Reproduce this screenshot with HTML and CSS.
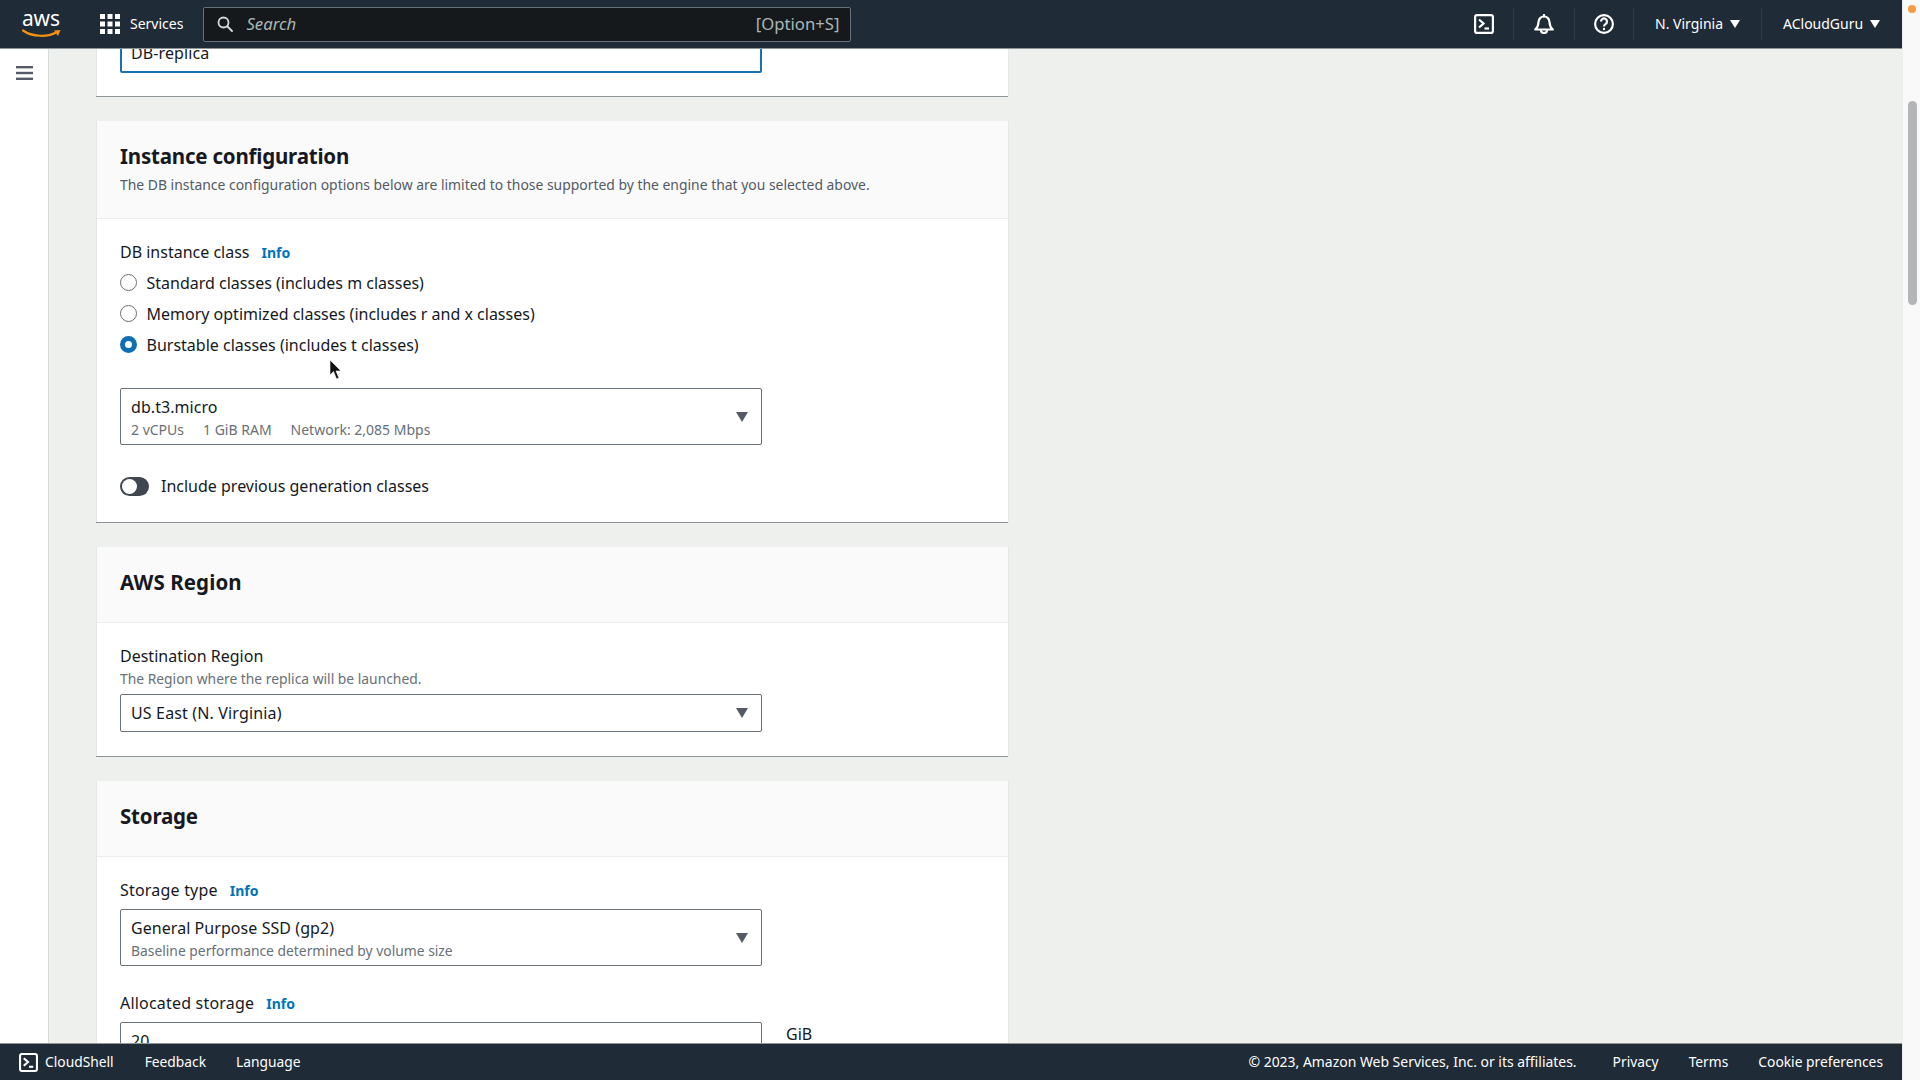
FILE: index.html
```html
<!DOCTYPE html>
<html lang="en">
<head>
<meta charset="utf-8">
<title>Create read replica</title>
<link rel="stylesheet" href="styles.css">
</head>
<body>
<div class="page">
  <header class="topbar">
    <a class="logo"><span class="logo-text">aws</span>
      <svg class="logo-smile" viewBox="0 0 40 9"><path d="M1 1.500C10 8 26 8.500 35 3" fill="none" stroke="#f29111" stroke-width="2.200" stroke-linecap="round"/><path d="M32 1.500 38.500 1 36 7Z" fill="#f29111"/></svg>
    </a>
    <a class="services">
      <svg class="grid-icon" viewBox="0 0 20 20" fill="#fff"><rect x="0" y="0" width="5" height="5"/><rect x="7.500" y="0" width="5" height="5"/><rect x="15" y="0" width="5" height="5"/><rect x="0" y="7.500" width="5" height="5"/><rect x="7.500" y="7.500" width="5" height="5"/><rect x="15" y="7.500" width="5" height="5"/><rect x="0" y="15" width="5" height="5"/><rect x="7.500" y="15" width="5" height="5"/><rect x="15" y="15" width="5" height="5"/></svg>
      <span>Services</span>
    </a>
    <div class="search">
      <svg class="search-icon" viewBox="0 0 16 16" fill="none" stroke="#d5dbdb" stroke-width="1.800"><circle cx="6.500" cy="6.500" r="5"/><path d="M10.500 10.500 15 15" stroke-linecap="round"/></svg>
      <span class="search-ph">Search</span>
      <span class="search-key">[Option+S]</span>
    </div>
    <div class="top-right">
      <a class="top-cell cell-term"><svg class="top-icon" viewBox="0 0 20 20" fill="none" stroke="#fff" stroke-width="2.200"><rect x="1.100" y="1.100" width="17.800" height="17.800" rx="2"/><path d="M5 5.500 9.500 9.500 5 13.500"/><path d="M10.500 14.500H15"/></svg></a>
      <a class="top-cell cell-bell"><svg class="top-icon" viewBox="0 0 20 20" fill="none" stroke="#fff" stroke-width="2.200" stroke-linejoin="round" stroke-linecap="round"><path d="M1.200 15.500C3.500 13.500 4.500 11 4.500 8A5.500 5.500 0 0 1 15.500 8C15.500 11 16.500 13.500 18.800 15.500Z"/><path d="M10 1V2.500"/><path d="M7 16a3 3 0 0 0 6 0"/></svg></a>
      <a class="top-cell cell-help"><svg class="top-icon" viewBox="0 0 20 20" fill="none" stroke="#fff" stroke-width="2.200"><circle cx="10" cy="10" r="8.900"/><path d="M7 7.500a3 3 0 1 1 4.500 2.600c-1 .6-1.500 1.200-1.500 2.400"/><circle cx="10" cy="15" r="1.200" fill="#fff" stroke="none"/></svg></a>
      <a class="top-cell cell-menu"><span>N. Virginia</span><svg class="top-caret" viewBox="0 0 10 8"><path d="M0 0H10L5 8Z" fill="#fff"/></svg></a>
      <a class="top-cell cell-menu cell-last"><span>ACloudGuru</span><svg class="top-caret" viewBox="0 0 10 8"><path d="M0 0H10L5 8Z" fill="#fff"/></svg></a>
    </div>
  </header>

  <div class="workspace">
    <aside class="rail">
      <svg class="burger" viewBox="0 0 17 14" fill="#545b64"><rect width="17" height="2.400"/><rect y="5.800" width="17" height="2.400"/><rect y="11.600" width="17" height="2.400"/></svg>
    </aside>
    <main class="content">
      <section class="card card-clipped">
        <div class="card-body body-clipped">
          <div class="input input-focus">DB-replica</div>
        </div>
      </section>

      <section class="card">
        <div class="card-head card-head-tall">
          <h2>Instance configuration</h2>
          <p class="head-desc">The DB instance configuration options below are limited to those supported by the engine that you selected above.</p>
        </div>
        <div class="card-body">
          <div class="label"><span>DB instance class</span><a class="info">Info</a></div>
          <div class="radios">
            <div class="radio-row"><span class="radio"></span><span>Standard classes (includes m classes)</span></div>
            <div class="radio-row"><span class="radio"></span><span>Memory optimized classes (includes r and x classes)</span></div>
            <div class="radio-row"><span class="radio radio-on"></span><span>Burstable classes (includes t classes)</span></div>
          </div>
          <div class="select select-tall select-class">
            <div class="select-text">
              <div>db.t3.micro</div>
              <div class="sub specs"><span>2 vCPUs</span><span>1 GiB RAM</span><span>Network: 2,085 Mbps</span></div>
            </div>
            <svg class="caret" viewBox="0 0 12 10"><path d="M0 0H12L6 10Z" fill="#545b64"/></svg>
          </div>
          <div class="toggle-row"><span class="toggle"><span class="knob"></span></span><span>Include previous generation classes</span></div>
        </div>
      </section>

      <section class="card card-region">
        <div class="card-head"><h2>AWS Region</h2></div>
        <div class="card-body">
          <div class="label"><span>Destination Region</span></div>
          <div class="sub field-desc">The Region where the replica will be launched.</div>
          <div class="select select-short">
            <div class="select-text">US East (N. Virginia)</div>
            <svg class="caret" viewBox="0 0 12 10"><path d="M0 0H12L6 10Z" fill="#545b64"/></svg>
          </div>
        </div>
      </section>

      <section class="card">
        <div class="card-head"><h2>Storage</h2></div>
        <div class="card-body">
          <div class="label label-wide"><span>Storage type</span><a class="info">Info</a></div>
          <div class="select select-tall select-storage">
            <div class="select-text">
              <div>General Purpose SSD (gp2)</div>
              <div class="sub">Baseline performance determined by volume size</div>
            </div>
            <svg class="caret" viewBox="0 0 12 10"><path d="M0 0H12L6 10Z" fill="#545b64"/></svg>
          </div>
          <div class="label label-wide label-alloc"><span>Allocated storage</span><a class="info">Info</a></div>
          <div class="alloc-row">
            <div class="input">20</div>
            <span class="unit">GiB</span>
          </div>
        </div>
      </section>
    </main>
  </div>

  <footer class="footbar">
    <a class="foot-shell">
      <svg class="foot-icon" viewBox="0 0 20 20" fill="none" stroke="#fff" stroke-width="2.200"><rect x="1.100" y="1.100" width="17.800" height="17.800" rx="2"/><path d="M5 5.500 9.500 9.500 5 13.500"/><path d="M10.500 14.500H15"/></svg>
      <span>CloudShell</span>
    </a>
    <a class="foot-link foot-first">Feedback</a>
    <a class="foot-link">Language</a>
    <div class="foot-right">
      <span class="foot-copy">© 2023, Amazon Web Services, Inc. or its affiliates.</span>
      <a>Privacy</a>
      <a>Terms</a>
      <a>Cookie preferences</a>
    </div>
  </footer>
</div>

<div class="scrollbar">
  <span class="scroll-dot"></span>
  <span class="scroll-thumb"></span>
</div>

<svg class="cursor" viewBox="0 0 13 20"><path d="M1 0V15L4.500 11.500 7.500 19 10 18 7 11H12Z" fill="#111" stroke="#fff" stroke-width=".6"/></svg>
</body>
</html>
```
FILE: styles.css
```css
* { box-sizing: border-box; }
html, body { height: 100%; }
body {
  margin: 0;
  display: flex;
  height: 1080px;
  overflow: hidden;
  font-family: "Noto Sans", "Liberation Sans", sans-serif;
  font-size: 16px;
  line-height: 22px;
  color: #16191f;
  background: #f9f9f9;
}
a { color: inherit; text-decoration: none; }
h2, p { margin: 0; }

.page { flex: 0 0 1902px; height: 1080px; display: flex; flex-direction: column; }

/* top bar */
.topbar {
  flex: 0 0 49px;
  display: flex;
  align-items: center;
  background: #202b38;
  color: #fff;
  font-size: 14px;
  border-bottom: 1px solid #8d9596;
}
.logo { width: 40px; margin-left: 22px; height: 30px; display: block; position: relative; }
.logo-text { display: block; font-size: 21px; line-height: 22px; letter-spacing: -.2px; text-align: center; margin-top: -2px; padding-right: 3px; }
.logo-smile { display: block; width: 40px; height: 9px; margin-top: 0; }
.services { display: flex; align-items: center; margin-left: 38px; }
.grid-icon { width: 20px; height: 20px; margin-right: 10px; }
.search {
  margin-left: 20px;
  width: 648px;
  height: 35px;
  display: flex;
  align-items: center;
  background: #16191c;
  border: 1px solid #687078;
  border-radius: 2px;
  padding: 0 11px 0 13px;
  color: #aab7b8;
}
.search-icon { width: 16px; height: 16px; margin-right: 13px; }
.search-ph { font-style: italic; font-size: 16.700px; }
.search-key { margin-left: auto; font-size: 16.700px; }
.top-right { margin-left: auto; display: flex; align-items: center; height: 36px; }
.top-cell { display: flex; align-items: center; justify-content: center; height: 32px; border-right: 1px solid #303c4a; }
.cell-term { width: 60px; }
.cell-bell { width: 61px; }
.cell-help { width: 59px; }
.top-icon { width: 20px; height: 20px; }
.cell-menu { width: 128px; justify-content: flex-start; padding-left: 21px; }
.cell-last { border-right: 0; width: 140px; }
.top-caret { width: 10px; height: 8px; margin-left: 7px; }

/* workspace */
.workspace { flex: 1; display: flex; overflow: hidden; min-height: 0; }
.rail { flex: 0 0 49px; background: #fff; border-right: 1px solid #d5dbdb; padding: 17px 0 0 16px; }
.burger { display: block; width: 17px; height: 14px; }
.content { flex: 1; background: #eef0ee; padding-left: 47px; overflow: hidden; }

.card {
  width: 912px;
  background: #fff;
  border-left: 1px solid #e4e7e7;
  box-shadow: 0 1px 0 #8d9596, 1px 0 0 #e4e7e7;
  margin-bottom: 25px;
}
.card-clipped { margin-top: -16px; }
.card-head { padding: 21px 23px 26px; background: #fafafa; border-bottom: 1px solid #eaeded; }
.card-head-tall { padding-bottom: 23px; }
.card-head h2 { font-size: 20.500px; line-height: 28px; font-weight: 700; letter-spacing: -.2px; }
.card-region .card-head h2 { letter-spacing: .1px; }
.head-desc { margin-top: 5px; font-size: 13.920px; line-height: 20px; color: #545b64; }
.card-body { padding: 22px 23px 25px; }
.body-clipped { padding: 0 23px 23px; }
.card-region .card-body { padding-bottom: 24px; }

.label { display: flex; align-items: baseline; height: 22px; }
.label-wide > span { letter-spacing: .2px; }
.info { margin-left: 12px; font-size: 14px; font-weight: 700; color: #0073bb; }
.label-alloc { margin-top: 26px; }
.sub { font-size: 13.850px; line-height: 20px; color: #687078; }

.radios { margin-top: 4px; }
.radio-row { display: flex; align-items: center; height: 31px; }
.radio { width: 17px; height: 17px; margin-right: 9.500px; border: 1.500px solid #687078; border-radius: 50%; background: #fff; }
.radio-on { border: 5px solid #0f6fb3; }

.select, .input { width: 642px; background: #fff; border: 1px solid #687078; border-radius: 2px; }
.select { display: flex; align-items: center; justify-content: space-between; padding: 0 13px 0 10px; }
.select-tall { height: 57px; }
.select-tall .select-text { padding-top: 2px; letter-spacing: .06px; }
.select-tall .sub { margin-top: 2px; letter-spacing: 0; }
.select-short { height: 38px; margin-top: 5px; }
.select-short .select-text { letter-spacing: .15px; }
.select-class { margin-top: 28px; }
.select-storage { margin-top: 8px; }
.caret { width: 12px; height: 10px; }
.specs { display: flex; gap: 19px; font-size: 14px; }
.field-desc { margin-top: 2px; }

.input { height: 38px; padding: 7px 10px; }
.input-focus { height: 40px; border: 2px solid #1a71b5; padding: 7px 9px; letter-spacing: .1px; }

.toggle-row { display: flex; align-items: center; height: 22px; margin-top: 30px; }
.toggle { width: 29px; height: 19px; border-radius: 10px; background: #414750; margin-right: 12px; padding: 2px; display: block; }
.knob { display: block; width: 15px; height: 15px; border-radius: 50%; background: #fff; }

.alloc-row { display: flex; align-items: flex-start; margin-top: 8px; }
.unit { margin-left: 24px; margin-top: 1px; line-height: 22px; }

/* footer */
.footbar {
  flex: 0 0 37px;
  display: flex;
  align-items: center;
  background: #202b38;
  color: #fff;
  font-size: 13.800px;
  padding: 0 19px 0 19px;
  border-top: 1px solid #8d9596;
  position: relative;
}
.foot-shell { display: flex; align-items: center; }
.foot-icon { width: 19px; height: 19px; margin-right: 7px; }
.foot-link { margin-left: 30px; }
.foot-first { margin-left: 31px; }
.foot-right { margin-left: auto; display: flex; gap: 30px; }
.foot-copy { margin-right: 6px; font-size: 13.950px; }

/* scrollbar */
.scrollbar { flex: 1; padding: 5px 0 0 5px; background: #f9f9f9; border-left: 1px solid #eceeee; display: flex; flex-direction: column; }
.scroll-dot { width: 8px; height: 8px; border-radius: 50%; background: #f59b42; margin-bottom: 88px; }
.scroll-thumb { width: 9px; height: 204px; border-radius: 5px; background: #b3b5b6; }

.cursor { position: absolute; left: 329px; top: 360px; width: 13px; height: 20px; }
```
